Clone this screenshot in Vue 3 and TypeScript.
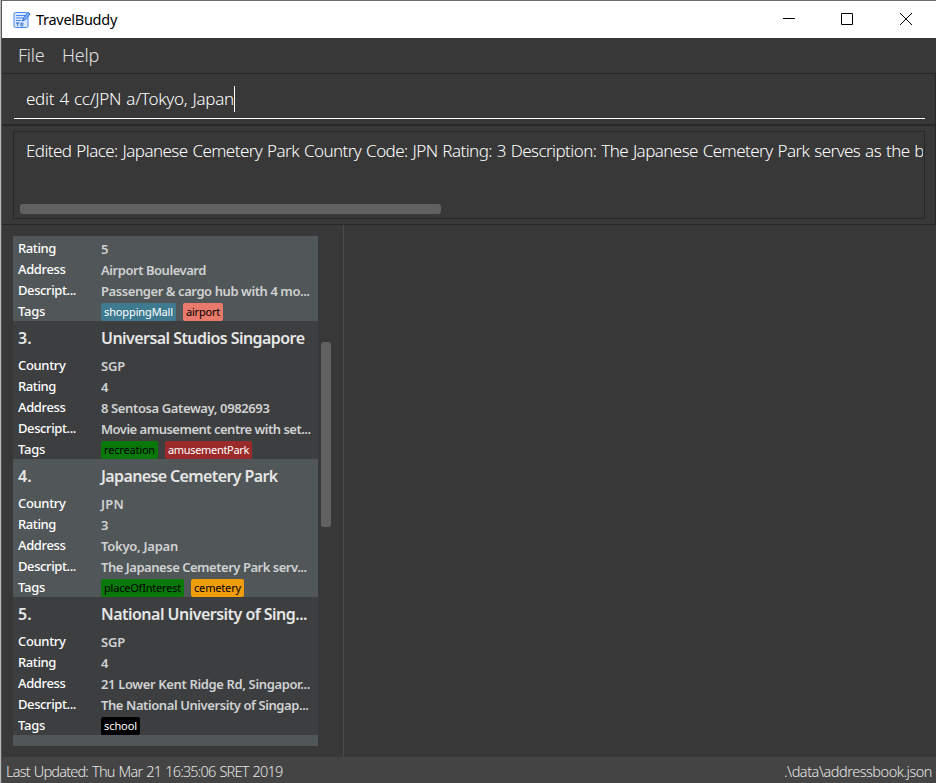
<script setup lang="ts">
interface Tag { name: string; bg: string; fg: string; w: number }
interface Field { label: string; value: string; w: number }
interface Place { index: string; name: string; w: number; fields: Field[]; tags: Tag[] }

const labelWidths: Record<string, number> = { Country: 47.5, Rating: 38, Address: 47.5, 'Descript...': 58, Tags: 27 }

const places: Place[] = [
  {
    index: '', name: '', w: 0,
    fields: [
      { label: 'Rating', value: '5', w: 7 },
      { label: 'Address', value: 'Airport Boulevard', w: 105 },
      { label: 'Descript...', value: 'Passenger & cargo hub with 4 mo...', w: 208.5 },
    ],
    tags: [
      { name: 'shoppingMall', bg: '#3e7b91', fg: '#ffffff', w: 69 },
      { name: 'airport', bg: '#e9796a', fg: '#000000', w: 34 },
    ],
  },
  {
    index: '3.', name: 'Universal Studios Singapore', w: 203.5,
    fields: [
      { label: 'Country', value: 'SGP', w: 24 },
      { label: 'Rating', value: '4', w: 8 },
      { label: 'Address', value: '8 Sentosa Gateway, 0982693', w: 168.5 },
      { label: 'Descript...', value: 'Movie amusement centre with set...', w: 209.5 },
    ],
    tags: [
      { name: 'recreation', bg: '#087808', fg: '#000000', w: 51 },
      { name: 'amusementPark', bg: '#9b2b2b', fg: '#ffffff', w: 81 },
    ],
  },
  {
    index: '4.', name: 'Japanese Cemetery Park', w: 176.5,
    fields: [
      { label: 'Country', value: 'JPN', w: 23 },
      { label: 'Rating', value: '3', w: 7 },
      { label: 'Address', value: 'Tokyo, Japan', w: 77 },
      { label: 'Descript...', value: 'The Japanese Cemetery Park serv...', w: 205.5 },
    ],
    tags: [
      { name: 'placeOfInterest', bg: '#087808', fg: '#000000', w: 77 },
      { name: 'cemetery', bg: '#f09d0b', fg: '#000000', w: 47 },
    ],
  },
  {
    index: '5.', name: 'National University of Sing...', w: 206,
    fields: [
      { label: 'Country', value: 'SGP', w: 24 },
      { label: 'Rating', value: '4', w: 8 },
      { label: 'Address', value: '21 Lower Kent Ridge Rd, Singapor...', w: 209 },
      { label: 'Descript...', value: 'The National University of Singap...', w: 207.5 },
    ],
    tags: [{ name: 'school', bg: '#000000', fg: '#ffffff', w: 33 }],
  },
]

// Tracks a text run so that it spans the given advance width.
const vFit = {
  mounted(el: HTMLElement, binding: { value: number }) {
    const count = (el.textContent ?? '').length
    if (count < 2) return
    const natural = el.getBoundingClientRect().width
    el.style.letterSpacing = `${(binding.value - natural) / count}px`
  },
}
</script>

<template>
  <div class="desktop">
    <div class="window">
      <header class="titlebar">
        <svg class="logo" width="18" height="18" viewBox="0 0 18 18">
          <rect x="1" y="1.500" width="14" height="15" rx="1.500" fill="#d9e7ff" stroke="#4a88ef" />
          <path d="M3 4.500h9M3 7h7M3 9.500h5" stroke="#4a88ef" stroke-width="1.200" />
          <path d="M9.500 10l1-3 4.500-5.500 2 1.500-4.500 5.500z" fill="#8bb5ff" stroke="#246be0" />
          <path d="M3 12h3.500M4.700 12v3M8 12v3h1.500q1.500-.7 0-1.500q1.200-.9 0-1.500z" fill="none" stroke="#246be0" />
        </svg>
        <span v-fit="81" class="app-name">TravelBuddy</span>
        <div class="controls">
          <svg width="12" height="12" viewBox="0 0 12 12"><path d="M0 5.500h12" /></svg>
          <svg width="12" height="12" viewBox="0 0 12 12"><path d="M.5.5h11v11H.5z" /></svg>
          <svg width="12" height="12" viewBox="0 0 12 12"><path d="M0 0l12 12M12 0L0 12" /></svg>
        </div>
      </header>
      <nav class="menubar">
        <span v-fit="26.5">File</span>
        <span v-fit="37">Help</span>
      </nav>
      <section class="command">
        <div class="input"><span v-fit="208">edit 4 cc/JPN a/Tokyo, Japan</span><i class="caret"></i></div>
      </section>
      <section class="result">
        <div class="result-box">
          <div class="result-text"><span v-fit="898">Edited Place: Japanese Cemetery Park Country Code: JPN Rating: 3 Description: The Japanese Cemetery Park serves as the b</span></div>
          <div class="hbar"></div>
        </div>
      </section>
      <main class="content">
        <div class="list-pane">
          <div class="list">
            <article v-for="(p, i) in places" :key="i" class="card">
              <div v-if="p.name" class="title">
                <span>{{ p.index }}</span>
                <span><span v-fit="p.w">{{ p.name }}</span></span>
              </div>
              <div v-for="f in p.fields" :key="f.label" class="row">
                <span class="label"><span v-fit="labelWidths[f.label]">{{ f.label }}</span></span>
                <span class="value"><span v-fit="f.w">{{ f.value }}</span></span>
              </div>
              <div class="row">
                <span class="label"><span v-fit="labelWidths.Tags">Tags</span></span>
                <span class="tags">
                  <span v-for="t in p.tags" :key="t.name" class="tag" :style="{ background: t.bg, color: t.fg }"><span v-fit="t.w">{{ t.name }}</span></span>
                </span>
              </div>
            </article>
            <article class="card next"></article>
          </div>
          <div class="vtrack"><div class="vbar"></div></div>
        </div>
        <div class="detail"></div>
      </main>
      <footer class="status">
        <span v-fit="276.5">Last Updated: Thu Mar 21 16:35:06 SRET 2019</span>
        <span v-fit="148">.\data\addressbook.json</span>
      </footer>
    </div>
  </div>
</template>

<style>
body { margin: 0; overflow: hidden; }
</style>

<style scoped>
* { box-sizing: border-box; }
.desktop {
  width: 936px; height: 783px; padding-left: 1px; background: #b8b8b8; overflow: hidden;
  font-family: "Noto Sans", "Open Sans", sans-serif; white-space: pre;
}
.window {
  width: 935px; height: 783px; display: flex; flex-direction: column;
  border-top: 1px solid #6c6c6c; border-left: 1px solid #555; background: #383838;
}
.titlebar { height: 37px; flex: none; display: flex; align-items: center; background: #fff; padding-left: 11px; }
.logo { margin-right: 5px; }
.app-name { font-size: 14.500px; color: #000; padding-bottom: 1px; }
.controls { height: 13px; margin-left: auto; display: flex; gap: 46px; padding-right: 24px; }
.controls svg { fill: none; stroke: #000; stroke-width: 1; }
.controls svg:last-child { margin-left: 1px; }
.menubar {
  height: 35px; flex: none; display: flex; gap: 17.500px; align-items: center; padding: 0 0 2px 16px;
  font-size: 18px; font-weight: 300; color: #e0e0e0;
}
.command {
  height: 52px; flex: none; padding: 9px 10px 0 12px;
  border: 1px solid #272727; border-left: 0;
}
.input {
  height: 36px; display: flex; align-items: center; padding: 0 0 4px 12px;
  border-bottom: 1px solid #fff; color: #fff; font-size: 17px; font-weight: 300; word-spacing: 1px;
}
.caret { width: 1px; height: 26px; background: #fff; }
.result { height: 100px; flex: none; padding: 5px 10px 6px 11px; border: 1px solid #272727; border-left: 0; }
.result-box { height: 88px; border: 1px solid #272727; display: flex; flex-direction: column; }
.result-text {
  height: 72px; padding: 6px 0 0 12px; margin-right: 1px; overflow: hidden;
  font-size: 17px; line-height: 26px; font-weight: 300; color: #fff; word-spacing: 1px;
}
.hbar { width: 421px; height: 10px; flex: none; margin-left: 6px; border-radius: 3px; background: #616161; }
.content { height: 532px; flex: none; display: flex; }
.list-pane { width: 342px; padding: 11px 0 11px 11px; display: flex; border-right: 1px solid #4b4b4b; }
.list { width: 305px; height: 510px; overflow: hidden; }
.card { background: #3c3e3f; color: #fff; padding-top: 3px; }
.card:nth-child(odd) { background: #515658; }
.card:first-child { height: 85px; padding-top: 1px; }
.card:not(:first-child) { height: 138px; }
.title {
  height: 30px; display: grid; grid-template-columns: 83px 1fr; padding-left: 5px;
  font-size: 16px; font-weight: 600; line-height: 29px; color: #e6e6e6;
}
.row { height: 21px; display: grid; grid-template-columns: 83px 1fr; padding-left: 5px; font-size: 13px; font-weight: 500; line-height: 22px; }
.value { color: #d0d2d3; padding-top: 1px; font-weight: 600; }
.tags { display: flex; gap: 7px; padding-top: 3px; }
.tag { height: 18px; padding: 0 3px; border-radius: 2px; font-size: 11px; line-height: 17px; font-weight: 400; }
.vtrack { padding: 106px 0 0 3px; }
.vbar { width: 10px; height: 185px; border-radius: 3px; background: #616161; }
.status {
  flex: 1; display: flex; justify-content: space-between; padding: 2px 4px 0 4px;
  background: #444; color: #e6e6e6; font-size: 14.500px; line-height: 24px; font-weight: 300; word-spacing: 1px;
}
</style>
